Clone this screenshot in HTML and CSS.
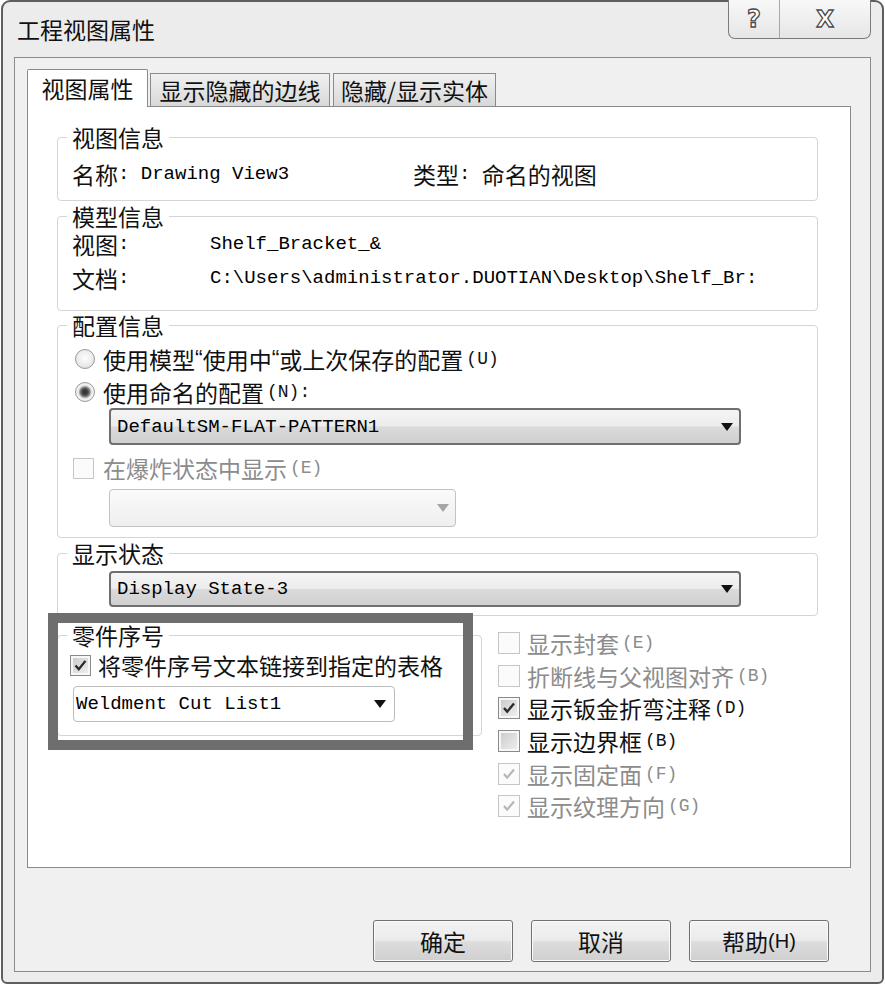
FILE: index.html
```html
<!DOCTYPE html>
<html lang="zh-CN">
<head>
<meta charset="utf-8">
<title>工程视图属性</title>
<link rel="stylesheet" href="styles.css">
</head>
<body>
<div class="window">
  <div class="titlebar">
    <div class="title">工程视图属性</div>
    <div class="caption">
      <div class="cap-btn cap-help">?</div>
      <div class="cap-btn cap-close">X</div>
    </div>
  </div>
  <div class="client">
    <div class="tabs">
      <div class="tab tab-active">视图属性</div>
      <div class="tab tab-inactive tab-2">显示隐藏的边线</div>
      <div class="tab tab-inactive tab-3">隐藏/显示实体</div>
    </div>
    <div class="panel">
      <div class="group g-view">
        <div class="gtitle">视图信息</div>
        <div class="row row-name">
          <div class="name-cell"><span>名称</span><span class="mono">: Drawing View3</span></div>
          <div class="type-cell"><span>类型</span><span class="mono">: </span><span>命名的视图</span></div>
        </div>
      </div>

      <div class="group g-model">
        <div class="gtitle">模型信息</div>
        <div class="row kv kv-1"><div class="kv-label"><span>视图</span><span class="mono">:</span></div><span class="mono">Shelf_Bracket_&amp;</span></div>
        <div class="row kv kv-2"><div class="kv-label"><span>文档</span><span class="mono">:</span></div><span class="mono">C:\Users\administrator.DUOTIAN\Desktop\Shelf_Br:</span></div>
      </div>

      <div class="group g-config">
        <div class="gtitle">配置信息</div>
        <div class="row opt-r1"><span class="rb"></span><span>使用模型</span><span class="quote">“</span><span>使用中</span><span class="quote">“</span><span>或上次保存的配置</span><span class="acc">(U)</span></div>
        <div class="row opt-r2"><span class="rb rb-on"></span><span>使用命名的配置</span><span class="acc">(N):</span></div>
        <div class="combo combo-config"><span>DefaultSM-FLAT-PATTERN1</span><span class="arrow"></span></div>
        <div class="row opt-explode disabled"><span class="cb cb-dis cb-explode"></span><span>在爆炸状态中显示</span><span class="acc">(E)</span></div>
        <div class="combo combo-dis"><span></span><span class="arrow arrow-dis"></span></div>
      </div>

      <div class="group g-state">
        <div class="gtitle">显示状态</div>
        <div class="combo combo-state"><span>Display State-3</span><span class="arrow"></span></div>
      </div>

      <div class="bottom">
        <div class="group g-balloon">
          <div class="gtitle">零件序号</div>
          <div class="row opt-link"><span class="cb cb-link"><svg viewBox="0 0 21 21"><path d="M5 10.5 L8.6 14.6 L16 5.4" fill="none" stroke="#2a2a2a" stroke-width="2.6"/></svg></span><span>将零件序号文本链接到指定的表格</span></div>
          <div class="combo combo-white"><span>Weldment Cut List1</span><span class="arrow"></span></div>
        </div>
        <div class="checks">
          <div class="crow disabled"><span class="cb cb-dis"></span><span>显示封套</span><span class="acc">(E)</span></div>
          <div class="crow disabled"><span class="cb cb-dis"></span><span>折断线与父视图对齐</span><span class="acc">(B)</span></div>
          <div class="crow"><span class="cb"><svg viewBox="0 0 22 22"><path d="M5.5 11 L9 15 L16.5 6" fill="none" stroke="#2a2a2a" stroke-width="2.6"/></svg></span><span>显示钣金折弯注释</span><span class="acc">(D)</span></div>
          <div class="crow"><span class="cb"></span><span>显示边界框</span><span class="acc">(B)</span></div>
          <div class="crow disabled"><span class="cb cb-dis"><svg viewBox="0 0 22 22"><path d="M5.5 11 L9 15 L16.5 6" fill="none" stroke="#b5b5b5" stroke-width="2.4"/></svg></span><span>显示固定面</span><span class="acc">(F)</span></div>
          <div class="crow disabled"><span class="cb cb-dis"><svg viewBox="0 0 22 22"><path d="M5.5 11 L9 15 L16.5 6" fill="none" stroke="#b5b5b5" stroke-width="2.4"/></svg></span><span>显示纹理方向</span><span class="acc">(G)</span></div>
        </div>
        <div class="highlight"></div>
      </div>
    </div>
    <div class="buttons">
      <div class="btn">确定</div>
      <div class="btn">取消</div>
      <div class="btn"><span>帮助</span><span class="btn-acc">(H)</span></div>
    </div>
  </div>
</div>
</body>
</html>
```

FILE: styles.css
```css
* { box-sizing: border-box; }
html, body { margin: 0; padding: 0; background: #fff; }
body {
  width: 885px;
  height: 985px;
  overflow: hidden;
  font-family: "Noto Sans CJK SC", "Liberation Sans", sans-serif;
  font-size: 23px;
  color: #111;
}

.window {
  margin-left: 1px;
  width: 883px;
  height: 984px;
  border: 2px solid #5e5e5e;
  border-radius: 9px 9px 6px 6px;
  background: #ececec;
  display: flex;
  flex-direction: column;
}

.titlebar {
  height: 55px;
  display: flex;
  justify-content: space-between;
  align-items: flex-start;
}
.title {
  margin: 14px 0 0 14px;
  line-height: 26px;
}
.caption {
  margin: -2px 11px 0 0;
  width: 143px;
  height: 39px;
  border: 1px solid #7b7b7b;
  border-top: none;
  border-radius: 0 0 7px 7px;
  background: linear-gradient(#f8f8f8, #e6e6e6);
  display: flex;
}
.cap-btn {
  display: flex;
  align-items: center;
  justify-content: center;
  font-family: "DejaVu Sans", sans-serif;
  font-weight: bold;
  color: #fff;
  -webkit-text-stroke: 1.3px #4a4a4a;
  line-height: 1;
}
.cap-help { width: 51px; border-right: 1px solid #a8a8a8; font-size: 24px; }
.cap-close { flex: 1; font-size: 23px; }

.client {
  margin-left: 11px;
  width: 857px;
  height: 915px;
  border: 1px solid #8c8c8c;
  background: #f0f0f0;
  padding: 11px 0 0 12px;
  display: flex;
  flex-direction: column;
}

.tabs {
  display: flex;
  align-items: flex-end;
  height: 38px;
  margin-bottom: -1px;
  position: relative;
  z-index: 1;
}
.tab {
  border: 1px solid #8a8a8a;
  border-bottom: none;
  text-align: center;
  white-space: nowrap;
}
.tab-active {
  width: 121px;
  height: 38px;
  line-height: 37px;
  background: #fff;
  border-radius: 2px 2px 0 0;
}
.tab-inactive {
  height: 33px;
  line-height: 32px;
  margin-bottom: 1px;
  background: linear-gradient(#f1f1f1, #d8d8d8);
}
.tab-2 { width: 180px; margin-left: 2px; }
.tab-3 { width: 163px; margin-left: 3px; }

.panel {
  width: 824px;
  height: 762px;
  background: #fff;
  border: 1px solid #8a8a8a;
  padding: 30px 0 0 29px;
}

.group {
  width: 761px;
  border: 1px solid #d5d5d5;
  border-radius: 4px;
  padding-left: 14px;
}
.gtitle {
  margin: -14px 0 0 -5px;
  padding: 0 5px;
  width: fit-content;
  height: 26px;
  background: #fff;
  line-height: 26px;
}

.row {
  display: flex;
  align-items: center;
  height: 26px;
  white-space: nowrap;
}
.row > span, .row > div { flex: none; }

.mono {
  font-family: "Liberation Mono", monospace;
  font-size: 19px;
  color: #000;
  white-space: pre;
}

.g-view { height: 64px; }
.row-name { margin-top: 11px; }
.name-cell, .type-cell, .kv-label { display: flex; align-items: center; }
.name-cell { width: 341px; }

.g-model { margin-top: 15px; height: 95px; }
.kv-label { width: 138px; }
.kv-1 { margin-top: 2px; }
.kv-2 { margin-top: 8px; }

.g-config { margin-top: 14px; height: 213px; }
.opt-r1 { margin-top: 8px; }
.opt-r2 { margin-top: 7px; }
.opt-explode { margin-top: 10px; }
.quote { font-family: "Liberation Sans", sans-serif; }
.acc {
  font-family: "Liberation Mono", monospace;
  font-size: 18px;
  margin-left: 3px;
}
.disabled { color: #8c8c8c; }

.rb {
  width: 20px;
  height: 20px;
  margin: 0 8px 0 3px;
  border-radius: 50%;
  border: 1px solid #9a9a9a;
  background: radial-gradient(circle at 50% 45%, #fdfdfd 0, #ececec 55%, #cfcfcf 100%);
}
.rb-on {
  background: radial-gradient(circle at 50% 50%, #2e2e2e 0, #444 3px, #8a8a8a 5px, #e2e2e2 6.5px, #f4f4f4 8px, #cfcfcf 100%);
}

.cb {
  width: 22px;
  height: 22px;
  border: 1px solid #8a8a8a;
  background: linear-gradient(135deg, #c9c9c9, #f1f1f1);
  box-shadow: inset 0 0 0 2px #f7f7f7;
  display: flex;
  align-items: center;
  justify-content: center;
  flex: none;
}
.cb svg { width: 100%; height: 100%; display: block; }
.cb-dis {
  border-color: #c6c6c6;
  background: #fbfbfb;
  box-shadow: none;
}
.cb-explode { width: 21px; height: 21px; margin: 0 9px 0 1px; }

.combo {
  display: flex;
  align-items: center;
  justify-content: space-between;
  margin-left: 37px;
  border: 2px solid #6f6f6f;
  border-radius: 4px;
  background: linear-gradient(#f5f5f5 0%, #ececec 48%, #dadada 52%, #d0d0d0 100%);
  padding: 0 6px 0 6px;
  font-family: "Liberation Mono", monospace;
  font-size: 19px;
  color: #000;
  white-space: pre;
}
.arrow {
  width: 0;
  height: 0;
  border-left: 6px solid transparent;
  border-right: 6px solid transparent;
  border-top: 8px solid #111;
}
.arrow-dis { border-top-color: #a5a5a5; }
.combo-config { margin-top: 3px; width: 632px; height: 37px; }
.combo-dis {
  margin-top: 8px;
  width: 347px;
  height: 38px;
  border: 1px solid #c3c3c3;
  background: linear-gradient(#fafafa, #efefef);
}
.g-state { margin-top: 15px; height: 63px; }
.combo-state { margin-top: 5px; width: 632px; height: 36px; }

.bottom {
  position: relative;
  display: flex;
  align-items: flex-start;
  margin-top: 19px;
}
.g-balloon { width: 425px; height: 101px; flex: none; }
.opt-link { margin-top: 4px; }
.cb-link { width: 21px; height: 21px; margin: 0 7px 0 -2px; }
.combo-white {
  margin: 8px 0 0 1px;
  width: 322px;
  height: 36px;
  border: 1px solid #bcbcbc;
  background: #fff;
  padding: 0 8px 0 2px;
}

.checks { margin: -8px 0 0 16px; }
.crow {
  display: flex;
  align-items: center;
  height: 32.6px;
  white-space: nowrap;
}
.crow .cb { margin-right: 7px; }

.highlight {
  position: absolute;
  left: -9px;
  top: -22px;
  width: 425px;
  height: 137px;
  border: 10px solid #6e6e6e;
}

.buttons {
  width: 824px;
  margin-top: 52px;
  padding-right: 22px;
  display: flex;
  justify-content: flex-end;
  gap: 18px;
}
.btn {
  width: 140px;
  height: 42px;
  border: 1px solid #707070;
  border-radius: 3px;
  background: linear-gradient(#f3f3f3 0%, #ebebeb 48%, #dddddd 52%, #cfcfcf 100%);
  box-shadow: inset 0 0 0 1px #fbfbfb;
  display: flex;
  align-items: center;
  justify-content: center;
  line-height: 1;
}
.btn-acc { font-family: "Liberation Sans", sans-serif; font-size: 20px; }
```
